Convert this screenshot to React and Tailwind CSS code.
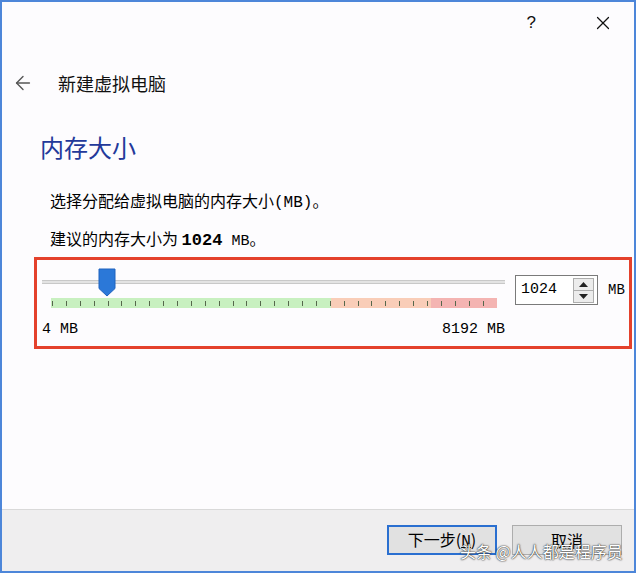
import { ArrowLeft, X } from "lucide-react";

const cjk = { fontFamily: '"Noto Sans CJK SC", "Noto Sans", sans-serif' };
const mono = { fontFamily: '"Liberation Mono", "Noto Sans CJK SC", monospace' };

const TICKS = Array.from({ length: 32 }, (_, i) => i);

function MemorySlider() {
  return (
    <div className="flex flex-col w-[463px]">
      <div className="relative h-[30px]">
        <div className="mt-[12px] h-[4px] bg-[#e3e3e3] border-y border-[#c8c8c8]" />
        <svg
          className="absolute left-[56px] top-0"
          width="18"
          height="29"
          viewBox="0 0 18 29"
        >
          <path
            d="M1 1 H17 V20.5 L9 28 L1 20.5 Z"
            fill="#2b78d8"
            stroke="#1f62bf"
            strokeWidth="1"
          />
        </svg>
      </div>
      <div className="relative ml-[9px] w-[446px] h-[10px] flex">
        <div className="w-[280px] bg-[#c8f0c0]" />
        <div className="w-[100px] bg-[#f9cdb8]" />
        <div className="flex-1 bg-[#f4b4b2]" />
        <div className="absolute inset-y-0 left-[1px] w-[432px] flex justify-between items-center">
          {TICKS.map((t) => (
            <span key={t} className="w-px h-[5px] bg-[#56684c]" />
          ))}
        </div>
      </div>
      <div className="mt-[13px] flex justify-between text-[15px] leading-[18px] text-black" style={mono}>
        <span>4 MB</span>
        <span>8192 MB</span>
      </div>
    </div>
  );
}

function SpinBox() {
  return (
    <div className="flex items-center">
      <div className="w-[83px] h-[30px] border border-[#7a7a7a] bg-white flex items-center pl-[5px] pr-[3px]">
        <span className="flex-1 text-[15px] text-black" style={mono}>
          1024
        </span>
        <div className="w-[21px] h-[25px] flex flex-col border border-[#adadad] bg-[#ececec]">
          <div className="flex-1 flex items-center justify-center border-b border-[#adadad]">
            <svg width="9" height="5" viewBox="0 0 9 5">
              <path d="M0 5 L4.5 0 L9 5 Z" fill="#222" />
            </svg>
          </div>
          <div className="flex-1 flex items-center justify-center">
            <svg width="9" height="5" viewBox="0 0 9 5">
              <path d="M0 0 L4.5 5 L9 0 Z" fill="#222" />
            </svg>
          </div>
        </div>
      </div>
      <span className="ml-[10px] text-[14px] text-black" style={mono}>
        MB
      </span>
    </div>
  );
}

export default function App() {
  return (
    <div className="w-[640px] h-[574px] bg-white">
      <div
        className="w-[636px] h-[573px] border-2 border-[#4d86d9] bg-[#fdfcfe] flex flex-col"
        style={cjk}
      >
        <div className="h-[42px] flex items-center justify-end pr-[20px] gap-[56px] text-[#111]">
          <span className="text-[17px]" style={{ fontFamily: '"Liberation Sans", sans-serif' }}>
            ?
          </span>
          <X size={22} strokeWidth={1.3} />
        </div>

        <div className="mt-[26px] h-[26px] flex items-center pl-[10px]">
          <ArrowLeft size={22} strokeWidth={1.5} className="text-[#555]" />
          <span className="ml-[24px] text-[18px] text-[#111]">新建虚拟电脑</span>
        </div>

        <div className="mt-[35px] h-[32px] pl-[38px] text-[24px] leading-[32px] text-[#23399a]">
          内存大小
        </div>

        <div className="mt-[25px] h-[24px] pl-[48px] text-[16px] leading-[24px] text-black">
          选择分配给虚拟电脑的内存大小<span style={mono}>(MB)</span>。
        </div>

        <div className="mt-[14px] h-[24px] pl-[48px] text-[16px] leading-[24px] text-black flex items-baseline">
          <span>建议的内存大小为&nbsp;</span>
          <span className="font-bold text-[17px]" style={mono}>1024</span>
          <span className="text-[15px]" style={mono}>&nbsp;MB</span>
          <span>。</span>
        </div>

        <div className="mt-[7px] ml-[32px] w-[598px] border-[3px] border-[#e4412c] pl-[5px] pt-[8px] pb-[7px] flex items-start">
          <MemorySlider />
          <div className="ml-[10px] mt-[7px]">
            <SpinBox />
          </div>
        </div>

        <div className="flex-1" />

        <div className="relative h-[62px] border-t border-[#d9d9d9] bg-[#efeeef] flex justify-end items-start pt-[15px] pr-[12px] gap-[15px]">
          <button className="w-[110px] h-[30px] border-2 border-[#2a6fd0] bg-[#e1e1e1] text-[16px] text-black">
            下一步(<span className="underline" style={mono}>N</span>)
          </button>
          <button className="w-[110px] h-[30px] border border-[#adadad] bg-[#e1e1e1] text-[16px] text-black">
            取消
          </button>
          <span className="absolute left-[458px] top-[29px] text-[16px] text-white [text-shadow:0_0_2px_#333,0_0_1px_#000]">
            头条 @人人都是程序员
          </span>
        </div>
      </div>
    </div>
  );
}
